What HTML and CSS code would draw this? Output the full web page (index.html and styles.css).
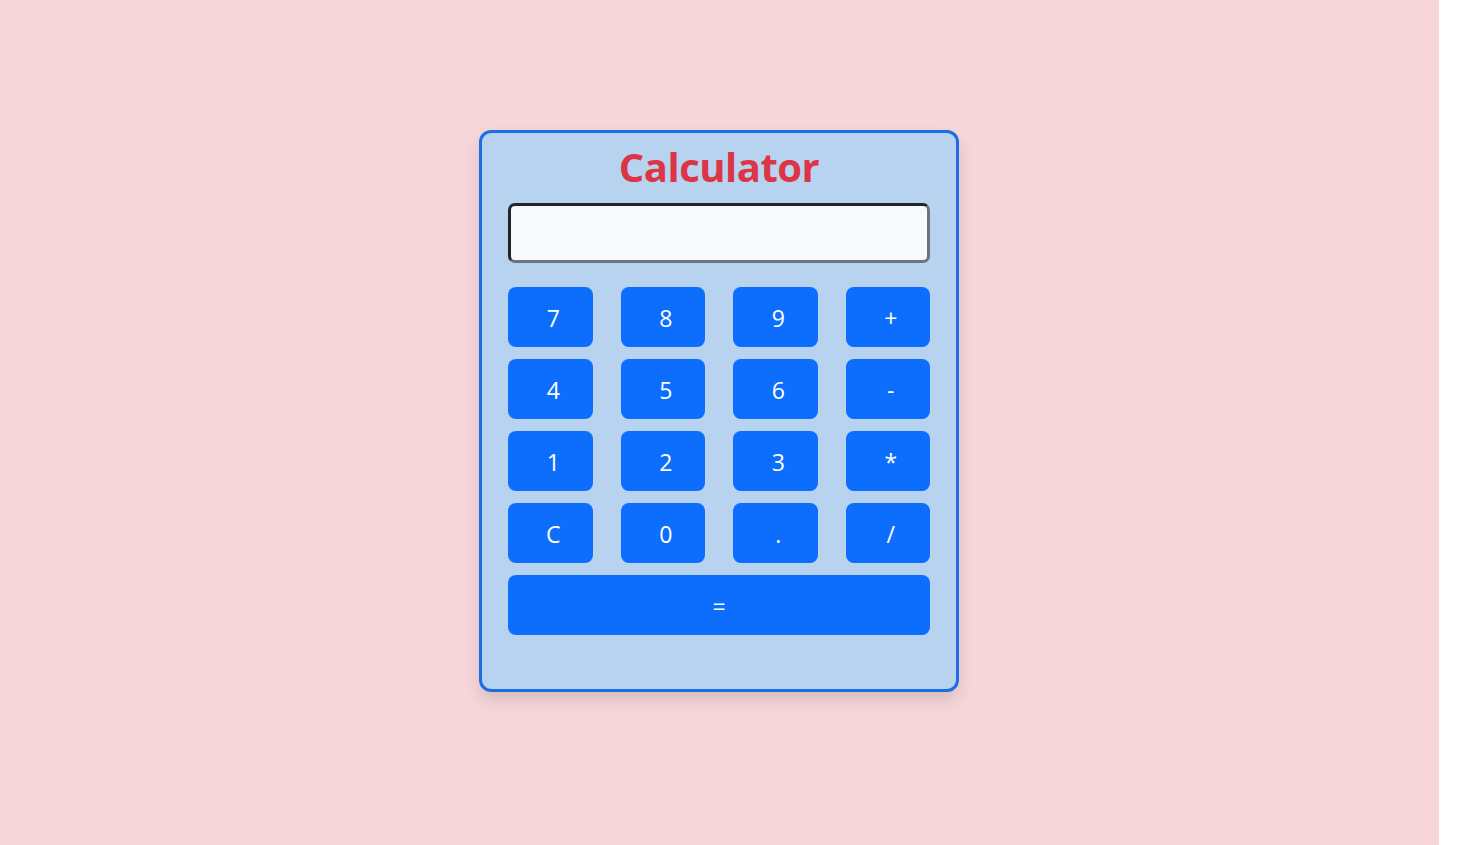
FILE: index.html
```html
<!DOCTYPE html>
<html lang="en">
<head>
<meta charset="utf-8">
<title>Calculator</title>
<link rel="stylesheet" href="styles.css">
</head>
<body>
<div class="page">
  <div class="calc">
    <h1 class="title">Calculator</h1>
    <input class="display" type="text" readonly>
    <div class="keys">
      <button class="key">7</button>
      <button class="key">8</button>
      <button class="key">9</button>
      <button class="key">+</button>
      <button class="key">4</button>
      <button class="key">5</button>
      <button class="key">6</button>
      <button class="key">-</button>
      <button class="key">1</button>
      <button class="key">2</button>
      <button class="key">3</button>
      <button class="key">*</button>
      <button class="key">C</button>
      <button class="key">0</button>
      <button class="key">.</button>
      <button class="key">/</button>
      <button class="key key-wide">=</button>
    </div>
  </div>
</div>
</body>
</html>
```
FILE: styles.css
```css
html, body {
  margin: 0;
  padding: 0;
  background: #ffffff;
}
.page {
  width: 1439px;
  height: 845px;
  background: #f7d6da;
  display: flex;
  justify-content: flex-start;
  align-items: flex-start;
  padding: 130px 0 0 479px;
  box-sizing: border-box;
  font-family: "Open Sans", "Noto Sans", sans-serif;
}
.calc {
  width: 480px;
  height: 562px;
  box-sizing: border-box;
  background: #b7d3f0;
  border: 3px solid #1c6de6;
  border-radius: 12px;
  padding: 9px 26px 0 26px;
  box-shadow: 0 8px 16px rgba(0, 0, 0, 0.12);
  display: flex;
  flex-direction: column;
}
.title {
  margin: 0;
  text-align: center;
  color: #dc3545;
  font-size: 40px;
  font-weight: 700;
  line-height: 50px;
  letter-spacing: -0.5px;
}
.display {
  margin-top: 11px;
  height: 60px;
  box-sizing: border-box;
  width: 100%;
  background: #f8f9fa;
  border: 3px solid;
  border-color: #212529 #6c757d #6c757d #212529;
  border-radius: 7px;
  outline: none;
  font-size: 24px;
  padding: 0 10px;
}
.keys {
  margin-top: 24px;
  display: grid;
  grid-template-columns: repeat(4, 1fr);
  column-gap: 28px;
  row-gap: 12px;
}
.key {
  height: 60px;
  border: none;
  border-radius: 8px;
  background: #0d6efd;
  color: #ffffff;
  font-family: "Open Sans", "Noto Sans", sans-serif;
  font-size: 23px;
  padding: 2px 0 0 6px;
  cursor: pointer;
}
.key-wide {
  grid-column: 1 / -1;
  padding: 2px 0 0 0;
}
```
